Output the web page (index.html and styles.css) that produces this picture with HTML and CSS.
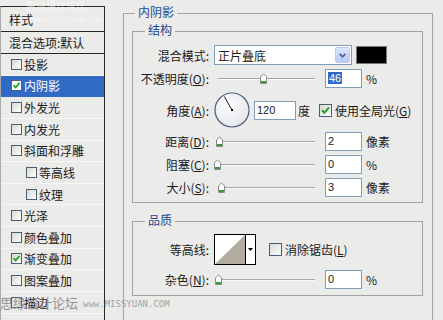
FILE: index.html
```html
<!DOCTYPE html>
<html>
<head>
    <title>图层样式 - 内阴影</title>
    <meta charset="utf-8">
    <link rel="stylesheet" href="styles.css">
</head>
<body>
    <div class="dialog">
        <div class="side">
            <div class="side-head head-styles">样式</div>
            <div class="side-head head-blend">混合选项:默认</div>
            <ul class="fx-list">
                <li><span class="cb"></span>投影</li>
                <li class="selected"><span class="cb"><svg width="9" height="9" viewBox="0 0 9 9"><path d="M1.5 4.2 L3.6 6.5 L7.6 1.8" fill="none" stroke="#21a121" stroke-width="1.8"/></svg></span>内阴影</li>
                <li><span class="cb"></span>外发光</li>
                <li><span class="cb"></span>内发光</li>
                <li><span class="cb"></span>斜面和浮雕</li>
                <li class="sub"><span class="cb"></span>等高线</li>
                <li class="sub"><span class="cb"></span>纹理</li>
                <li><span class="cb"></span>光泽</li>
                <li><span class="cb"></span>颜色叠加</li>
                <li><span class="cb"><svg width="9" height="9" viewBox="0 0 9 9"><path d="M1.5 4.2 L3.6 6.5 L7.6 1.8" fill="none" stroke="#21a121" stroke-width="1.8"/></svg></span>渐变叠加</li>
                <li><span class="cb"></span>图案叠加</li>
                <li><span class="cb"></span>描边</li>
            </ul>
        </div>

        <div class="main">
            <fieldset class="group outer">
                <legend>内阴影</legend>

                <fieldset class="group inner structure">
                    <legend>结构</legend>

                    <div class="row row-first">
                        <label class="lbl">混合模式:</label>
                        <div class="select">
                            <span class="select-text">正片叠底</span>
                            <span class="select-btn"><svg width="7" height="5" viewBox="0 0 7 5"><path d="M0.6 0.9 L3.5 3.8 L6.4 0.9" fill="none" stroke="#4a5f8a" stroke-width="1.6"/></svg></span>
                        </div>
                        <div class="swatch"></div>
                    </div>

                    <div class="row">
                        <label class="lbl">不透明度(<u>O</u>):</label>
                        <div class="slider">
                            <div class="track"></div>
                            <span class="thumb" style="left: 46px"><svg width="7" height="11" viewBox="0 0 7 11"><path d="M0.5 10.5 V4 L3.5 0.8 L6.5 4 V10.5 Z" fill="#fff" stroke="#8a8a8a"/><rect x="1" y="8" width="5" height="2" fill="#3a9a3a"/></svg></span>
                        </div>
                        <div class="num"><span class="sel">46</span></div>
                        <span class="unit">%</span>
                    </div>

                    <div class="row row-angle">
                        <label class="lbl">角度(<u>A</u>):</label>
                        <svg class="dial" width="36" height="36" viewBox="0 0 36 36">
                            <defs>
                                <radialGradient id="dialFill" cx="40%" cy="35%" r="70%">
                                    <stop offset="0" stop-color="#ffffff"/>
                                    <stop offset="1" stop-color="#e2e5ee"/>
                                </radialGradient>
                            </defs>
                            <circle cx="18" cy="18" r="17" fill="url(#dialFill)" stroke="#4f5c7a" stroke-width="1.2"/>
                            <line x1="18" y1="18" x2="10.3" y2="4.5" stroke="#111" stroke-width="1"/>
                            <rect x="17" y="17" width="2" height="2" fill="#000"/>
                        </svg>
                        <div class="num num-wide">120</div>
                        <span class="unit unit-deg">度</span>
                        <span class="cb big"><svg width="11" height="11" viewBox="0 0 11 11"><path d="M2 5.2 L4.4 7.8 L9 2.4" fill="none" stroke="#21a121" stroke-width="2"/></svg></span>
                        <span class="cb-text">使用全局光(<u>G</u>)</span>
                    </div>

                    <div class="row">
                        <label class="lbl">距离(<u>D</u>):</label>
                        <div class="slider">
                            <div class="track"></div>
                            <span class="thumb" style="left: 2px"><svg width="7" height="11" viewBox="0 0 7 11"><path d="M0.5 10.5 V4 L3.5 0.8 L6.5 4 V10.5 Z" fill="#fff" stroke="#8a8a8a"/><rect x="1" y="8" width="5" height="2" fill="#3a9a3a"/></svg></span>
                        </div>
                        <div class="num">2</div>
                        <span class="unit">像素</span>
                    </div>

                    <div class="row">
                        <label class="lbl">阻塞(<u>C</u>):</label>
                        <div class="slider">
                            <div class="track"></div>
                            <span class="thumb" style="left: 0px"><svg width="7" height="11" viewBox="0 0 7 11"><path d="M0.5 10.5 V4 L3.5 0.8 L6.5 4 V10.5 Z" fill="#fff" stroke="#8a8a8a"/><rect x="1" y="8" width="5" height="2" fill="#3a9a3a"/></svg></span>
                        </div>
                        <div class="num">0</div>
                        <span class="unit">%</span>
                    </div>

                    <div class="row">
                        <label class="lbl">大小(<u>S</u>):</label>
                        <div class="slider">
                            <div class="track"></div>
                            <span class="thumb" style="left: 4px"><svg width="7" height="11" viewBox="0 0 7 11"><path d="M0.5 10.5 V4 L3.5 0.8 L6.5 4 V10.5 Z" fill="#fff" stroke="#8a8a8a"/><rect x="1" y="8" width="5" height="2" fill="#3a9a3a"/></svg></span>
                        </div>
                        <div class="num">3</div>
                        <span class="unit">像素</span>
                    </div>
                </fieldset>

                <fieldset class="group inner quality">
                    <legend>品质</legend>

                    <div class="row row-contour">
                        <label class="lbl">等高线:</label>
                        <div class="contour">
                            <svg width="30" height="29" viewBox="0 0 30 29"><polygon points="0,29 30,0 30,29" fill="#b1ac9e"/></svg>
                            <span class="contour-arrow"><svg width="5" height="3" viewBox="0 0 5 3"><polygon points="0,0 5,0 2.5,3" fill="#000"/></svg></span>
                        </div>
                        <span class="cb big cb-anti"></span>
                        <span class="cb-text">消除锯齿(<u>L</u>)</span>
                    </div>

                    <div class="row">
                        <label class="lbl">杂色(<u>N</u>):</label>
                        <div class="slider">
                            <div class="track"></div>
                            <span class="thumb" style="left: 1px"><svg width="7" height="11" viewBox="0 0 7 11"><path d="M0.5 10.5 V4 L3.5 0.8 L6.5 4 V10.5 Z" fill="#fff" stroke="#8a8a8a"/><rect x="1" y="8" width="5" height="2" fill="#3a9a3a"/></svg></span>
                        </div>
                        <div class="num">0</div>
                        <span class="unit">%</span>
                    </div>
                </fieldset>
            </fieldset>
        </div>

        <!-- site watermarks over the screenshot -->
        <div class="mark mark-top">
            <span class="mark-cn">思缘设计论坛</span>
            <span class="mark-url">WWW.MISSYUAN.COM</span>
        </div>
        <div class="mark mark-bottom">
            <span class="mark-cn">思缘设计论坛</span>
            <span class="mark-url">www.MISSYUAN.COM</span>
        </div>
    </div>
</body>
</html>
```

FILE: styles.css
```css
* {
    box-sizing: border-box;
}

body {
    margin: 0;
    font-family: "Noto Sans CJK SC", "Noto Sans", sans-serif;
    font-size: 12px;
    color: #1a1a1a;
    background-color: #ebebea;
}

.dialog {
    position: relative;
    display: flex;
    width: 443px;
    height: 320px;
    overflow: hidden;
}

/* left list of effects */

.side {
    flex: none;
    width: 105px;
    height: 340px;
    margin-top: 6px;
    border-top: 1px solid #262626;
    border-left: 1px solid #a8a8a8;
    border-right: 1px solid #262626;
}

.side-head {
    display: flex;
    align-items: center;
    padding-left: 8px;
    border-bottom: 1px solid #262626;
}

.head-styles {
    height: 25px;
}

.head-blend {
    height: 22px;
}

.fx-list {
    list-style: none;
    margin: 0;
    padding: 0;
}

.fx-list li {
    display: flex;
    align-items: center;
    gap: 2px;
    height: 21.64px;
    padding-left: 10px;
    border-bottom: 1px solid #f7f7f5;
}

.fx-list li.sub {
    padding-left: 25px;
}

.fx-list li.selected {
    background-color: #316ac5;
    border-bottom-color: #316ac5;
    color: #fff;
}

.cb {
    flex: none;
    display: flex;
    align-items: center;
    justify-content: center;
    width: 11px;
    height: 11px;
    border: 1px solid #4a5e76;
    background: linear-gradient(135deg, #d8d8d2, #ffffff);
}

.selected .cb {
    background: #fff;
}

.cb.big {
    width: 13px;
    height: 13px;
}

/* right side group boxes */

.main {
    flex: 1;
    padding: 4px 0 0 18px;
}

.group {
    margin: 0;
    min-width: 0;
    border: 1px solid #a3a3a3;
}

.group > legend {
    padding: 0 3px 2px;
    line-height: 16px;
    color: #1b4b90;
}

.outer {
    width: 310px;
    height: 340px;
    padding: 0 9px 0 8px;
}

.outer > legend {
    margin-left: 3px;
}

.inner > legend {
    margin-left: 12px;
}

.structure {
    padding: 5px 0 5px 0;
}

.quality {
    margin-top: 9px;
    padding: 4px 0 6px 0;
}

.row {
    display: flex;
    align-items: center;
    height: 19px;
    margin-top: 4px;
}

.row-first {
    height: 20px;
    margin-top: 0;
}

.row-angle {
    height: 36px;
}

.row-contour {
    height: 31px;
    margin-top: 0;
}

.quality .row-contour + .row {
    margin-top: 5px;
}

.lbl {
    flex: none;
    width: 76px;
    margin-right: 5px;
    text-align: right;
    white-space: nowrap;
}

u {
    text-decoration-thickness: 1px;
    text-underline-offset: 1px;
}

.select {
    display: flex;
    align-items: center;
    width: 138px;
    height: 20px;
    border: 1px solid #7f9db9;
    background-color: #fff;
}

.select-text {
    flex: 1;
    padding-left: 3px;
}

.select-btn {
    display: flex;
    align-items: center;
    justify-content: center;
    width: 15px;
    height: 16px;
    margin-right: 1px;
    border: 1px solid #b8cbf3;
    border-radius: 2px;
    background: linear-gradient(#dde7fd, #b6c9f4);
}

.swatch {
    width: 31px;
    height: 18px;
    margin-left: 4px;
    border: 1px solid #7a7a7a;
    background-color: #000;
}

.slider {
    position: relative;
    display: flex;
    align-items: center;
    width: 101px;
    height: 100%;
    padding-left: 4px;
}

.track {
    flex: 1;
    height: 2px;
    border-top: 1px solid #a6a6a6;
    border-bottom: 1px solid #fafafa;
}

.thumb {
    position: absolute;
    top: 50%;
    margin-top: -6px;
    display: flex;
}

.num {
    flex: none;
    width: 37px;
    height: 19px;
    margin-left: 10px;
    padding-left: 2px;
    border: 1px solid #7f9db9;
    background-color: #fff;
    font-family: "Liberation Sans", Arial, sans-serif;
    font-size: 11px;
    line-height: 17px;
}

.num .sel {
    padding: 0 1px;
    background-color: #316ac5;
    color: #fff;
}

.unit {
    margin-left: 4px;
}

.dial {
    flex: none;
}

.num-wide {
    width: 42px;
    margin-left: 4px;
}

.unit-deg {
    margin-left: 2px;
}

.row-angle .cb {
    margin-left: 9px;
}

.cb-text {
    margin-left: 3px;
    white-space: nowrap;
}

.contour {
    display: flex;
    width: 42px;
    height: 31px;
    border: 1px solid #000;
    background-color: #fff;
}

.contour svg {
    display: block;
}

.contour-arrow {
    display: flex;
    align-items: center;
    justify-content: center;
    flex: 1;
    border-left: 1px solid #000;
}

.cb-anti {
    margin-left: 13px;
}

/* watermarks */

.mark {
    position: absolute;
    left: 0;
    pointer-events: none;
}

.mark-top {
    top: 0;
    left: 26px;
    display: flex;
    flex-direction: column;
    color: rgba(255, 255, 255, 0.55);
    font-size: 10px;
    line-height: 12px;
}

.mark-top .mark-url {
    margin-left: 8px;
    font-family: "DejaVu Sans Mono", monospace;
    font-size: 7px;
    line-height: 16px;
}

.mark-bottom {
    top: 293px;
    display: flex;
    align-items: center;
    color: rgba(128, 128, 128, 0.85);
    font-size: 13px;
}

.mark-bottom .mark-url {
    margin-left: 5px;
    margin-top: 3px;
    font-family: "DejaVu Sans Mono", monospace;
    font-size: 9px;
    color: #a2a2a2;
}
```
